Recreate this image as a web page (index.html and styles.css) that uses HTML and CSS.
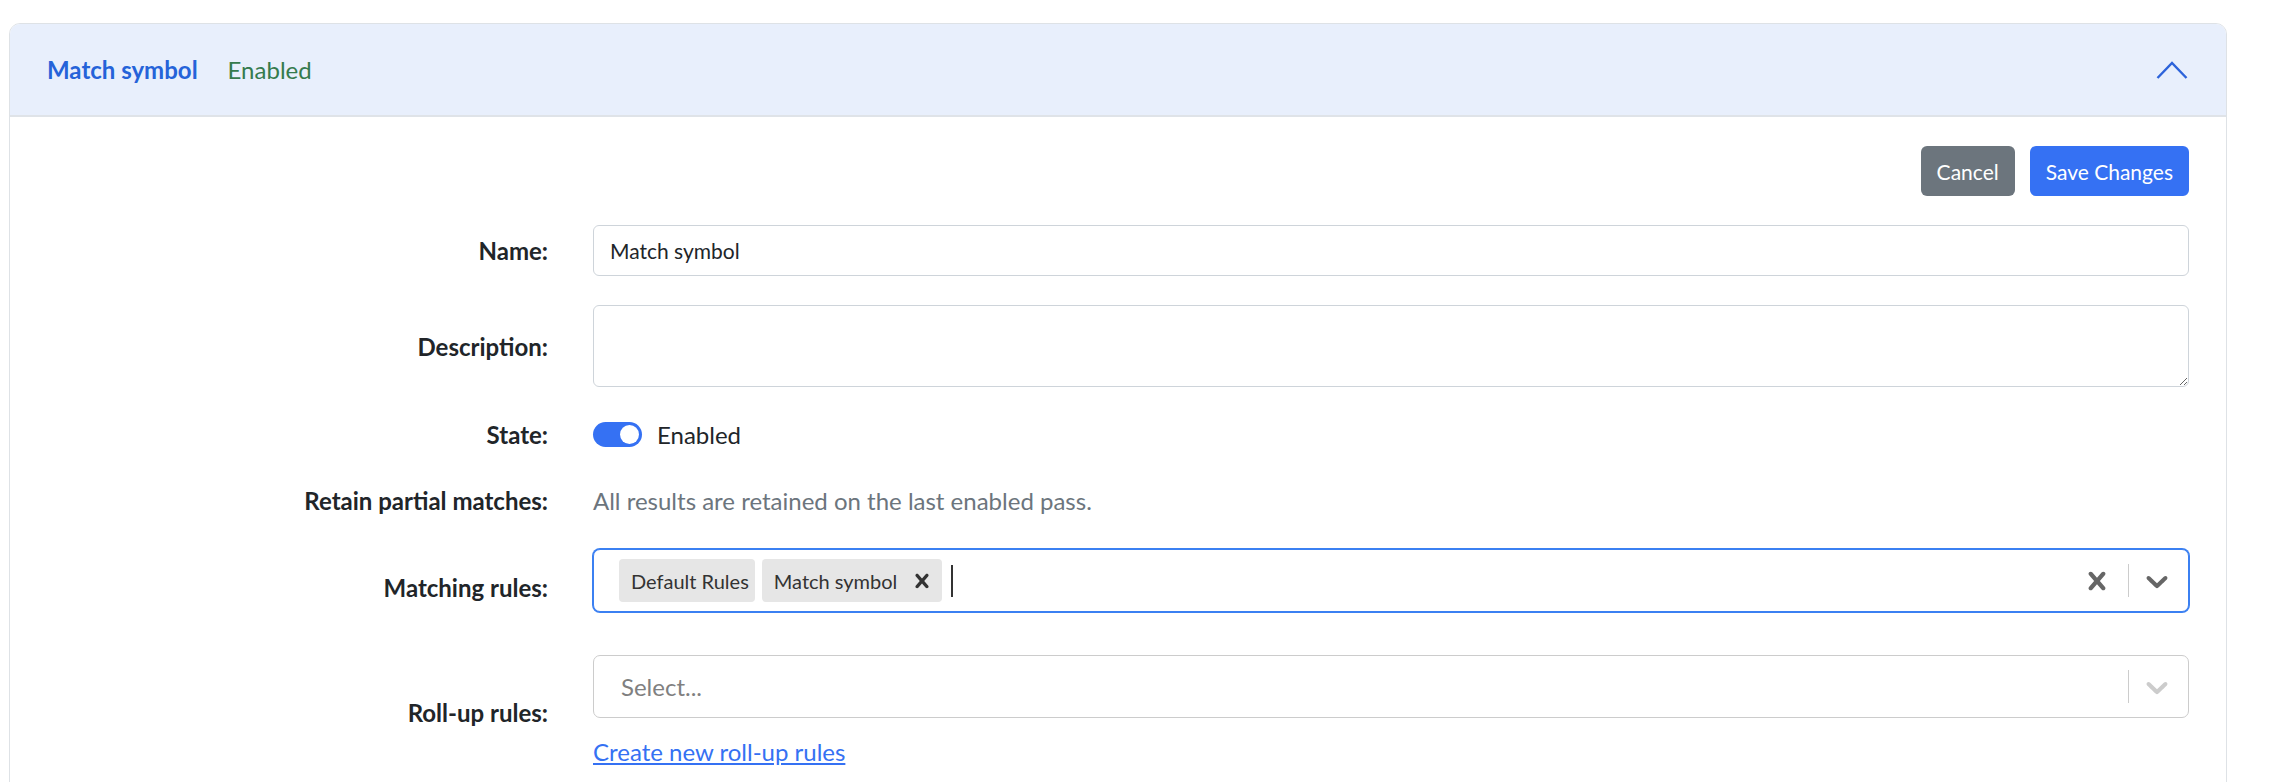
FILE: index.html
```html
<!DOCTYPE html>
<html lang="en">
<head>
<meta charset="utf-8">
<title>Match symbol</title>
<link rel="stylesheet" href="styles.css">
</head>
<body>
<div class="page">
  <section class="card">
    <header class="card-header">
      <span class="card-title">Match symbol</span>
      <span class="card-status">Enabled</span>
      <svg class="collapse-icon" viewBox="0 0 32 18" width="32" height="18" aria-hidden="true">
        <polyline points="1.5,17 16,2 30.5,17" fill="none" stroke="#2d63da" stroke-width="2.4"/>
      </svg>
    </header>
    <div class="card-body">
      <div class="actions">
        <button class="btn btn-secondary" type="button">Cancel</button>
        <button class="btn btn-primary" type="button">Save Changes</button>
      </div>
      <form class="form-grid">
        <label class="form-label">Name:</label>
        <div class="field"><input class="form-control" type="text" value="Match symbol"></div>

        <label class="form-label">Description:</label>
        <div class="field"><textarea class="form-control form-textarea"></textarea></div>

        <label class="form-label">State:</label>
        <div class="field field-inline">
          <span class="switch"><span class="switch-knob"></span></span>
          <span class="switch-label">Enabled</span>
        </div>

        <label class="form-label">Retain partial matches:</label>
        <div class="field field-inline"><span class="help-text">All results are retained on the last enabled pass.</span></div>

        <label class="form-label">Matching rules:</label>
        <div class="field field-matching">
          <div class="select select-focused">
            <div class="select-values">
              <span class="chip"><span class="chip-label">Default Rules</span></span>
              <span class="chip chip-removable"><span class="chip-label">Match symbol</span>
                <span class="chip-remove"><svg viewBox="0 0 20 20" width="28" height="28" aria-hidden="true"><path d="M14.348 14.849c-0.469 0.469-1.229 0.469-1.697 0l-2.651-3.030-2.651 3.029c-0.469 0.469-1.229 0.469-1.697 0-0.469-0.469-0.469-1.229 0-1.697l2.758-3.15-2.759-3.152c-0.469-0.469-0.469-1.228 0-1.697s1.228-0.469 1.697 0l2.652 3.031 2.651-3.031c0.469-0.469 1.228-0.469 1.697 0s0.469 1.229 0 1.697l-2.758 3.152 2.758 3.15c0.469 0.469 0.469 1.229 0 1.698z" fill="#333"/></svg></span>
              </span>
              <span class="caret"></span>
            </div>
            <div class="select-indicators">
              <span class="indicator indicator-clear"><svg viewBox="0 0 20 20" width="36" height="36" aria-hidden="true"><path d="M14.348 14.849c-0.469 0.469-1.229 0.469-1.697 0l-2.651-3.030-2.651 3.029c-0.469 0.469-1.229 0.469-1.697 0-0.469-0.469-0.469-1.229 0-1.697l2.758-3.15-2.759-3.152c-0.469-0.469-0.469-1.228 0-1.697s1.228-0.469 1.697 0l2.652 3.031 2.651-3.031c0.469-0.469 1.228-0.469 1.697 0s0.469 1.229 0 1.697l-2.758 3.152 2.758 3.15c0.469 0.469 0.469 1.229 0 1.698z" fill="currentColor"/></svg></span>
              <span class="separator"></span>
              <span class="indicator indicator-dropdown"><svg viewBox="0 0 20 20" width="36" height="36" aria-hidden="true"><path d="M4.516 7.548c0.436-0.446 1.043-0.481 1.576 0l3.908 3.747 3.908-3.747c0.533-0.481 1.141-0.446 1.574 0 0.436 0.445 0.408 1.197 0 1.615-0.406 0.418-4.695 4.502-4.695 4.502-0.217 0.223-0.502 0.335-0.787 0.335s-0.57-0.112-0.789-0.335c0 0-4.287-4.084-4.695-4.502s-0.436-1.17 0-1.615z" fill="currentColor"/></svg></span>
            </div>
          </div>
        </div>

        <label class="form-label">Roll-up rules:</label>
        <div class="field field-stack">
          <div class="select">
            <div class="select-values">
              <span class="placeholder">Select...</span>
            </div>
            <div class="select-indicators">
              <span class="separator"></span>
              <span class="indicator indicator-dropdown"><svg viewBox="0 0 20 20" width="36" height="36" aria-hidden="true"><path d="M4.516 7.548c0.436-0.446 1.043-0.481 1.576 0l3.908 3.747 3.908-3.747c0.533-0.481 1.141-0.446 1.574 0 0.436 0.445 0.408 1.197 0 1.615-0.406 0.418-4.695 4.502-4.695 4.502-0.217 0.223-0.502 0.335-0.787 0.335s-0.57-0.112-0.789-0.335c0 0-4.287-4.084-4.695-4.502s-0.436-1.17 0-1.615z" fill="currentColor"/></svg></span>
            </div>
          </div>
          <a class="create-link" href="#">Create new roll-up rules</a>
        </div>
      </form>
    </div>
  </section>
</div>
</body>
</html>
```
FILE: styles.css
```css
* { box-sizing: border-box; }

html, body {
  margin: 0;
  padding: 0;
  background: #ffffff;
}

body {
  font-family: Lato, "Open Sans", "Liberation Sans", sans-serif;
  font-size: 24px;
  color: #212529;
}

.page {
  padding: 23px 43px 0 9px;
}

.card {
  border: 1px solid #dee2e6;
  border-radius: 11px;
  background: #fff;
  min-height: 900px;
  overflow: hidden;
}

.card-header {
  height: 93px;
  display: flex;
  align-items: center;
  padding: 0 38px 0 37px;
  background: #e8effc;
  border-bottom: 2px solid #dfe3e8;
}

.card-title {
  font-weight: 700;
  font-size: 24px;
  color: #2563d9;
}

.card-status {
  margin-left: 30px;
  font-size: 24px;
  color: #357b4e;
}

.collapse-icon {
  margin-left: auto;
}

.card-body {
  padding: 29px 37px 0 37px;
}

.actions {
  display: flex;
  justify-content: flex-end;
  gap: 15px;
}

.btn {
  height: 50px;
  padding: 0 16px;
  border: none;
  border-radius: 6px;
  font-family: inherit;
  font-size: 21px;
  color: #fff;
}

.btn-secondary { background: #6c757d; }
.btn-primary { background: #3571f3; }

.form-grid {
  margin-top: 29px;
  display: grid;
  grid-template-columns: 501px 1fr;
  column-gap: 45px;
  row-gap: 29px;
  align-items: center;
}

.form-label {
  text-align: right;
  font-weight: 700;
  font-size: 24px;
  color: #212529;
}

.field-inline {
  height: 37px;
  display: flex;
  align-items: center;
}

.form-control {
  display: block;
  width: 100%;
  height: 51px;
  padding: 0 16px;
  border: 1px solid #ced4da;
  border-radius: 6px;
  font-family: inherit;
  font-size: 21px;
  color: #212529;
  background: #fff;
}

.form-textarea {
  height: 82px;
  resize: vertical;
  padding: 10px 16px;
}

.switch {
  position: relative;
  width: 49px;
  height: 25px;
  border-radius: 13px;
  background: #3571f3;
}

.switch-knob {
  position: absolute;
  top: 3px;
  right: 3px;
  width: 19px;
  height: 19px;
  border-radius: 50%;
  background: #fff;
}

.switch-label {
  margin-left: 15px;
  font-size: 24px;
  color: #212529;
}

.help-text {
  font-size: 24px;
  color: #6c757d;
}

.field-matching {
  padding: 1px 0 14px;
}

.select {
  height: 63px;
  display: flex;
  align-items: center;
  border: 1px solid #cccccc;
  border-radius: 7px;
  background: #fff;
}

.select-focused {
  border-color: #3b80f2;
  box-shadow: 0 0 0 1px #3b80f2;
}

.select-values {
  flex: 1;
  display: flex;
  align-items: center;
  gap: 7px;
  padding-left: 25px;
}

.chip {
  height: 43px;
  display: flex;
  align-items: center;
  padding: 0 6px 0 12px;
  border-radius: 4px;
  background: #e6e6e6;
  font-size: 20px;
  color: #333333;
}

.chip-remove {
  display: flex;
  align-items: center;
  margin-left: 11px;
}

.caret {
  width: 2px;
  height: 32px;
  margin-left: 2px;
  background: #333;
}

.placeholder {
  padding-left: 2px;
  font-size: 24px;
  color: #808080;
}

.select-indicators {
  display: flex;
  align-items: center;
  padding-right: 13px;
}

.indicator {
  display: flex;
  color: #666666;
}

.indicator-clear {
  margin-right: 13px;
}

.separator {
  width: 1px;
  height: 33px;
  background: #cccccc;
  margin-right: 10px;
}

.select:not(.select-focused) .indicator-dropdown {
  color: #cccccc;
}

.field-stack .create-link {
  display: inline-block;
  margin-top: 16px;
  line-height: 36px;
  font-size: 24px;
  color: #3571f3;
  text-decoration: underline;
}
```
